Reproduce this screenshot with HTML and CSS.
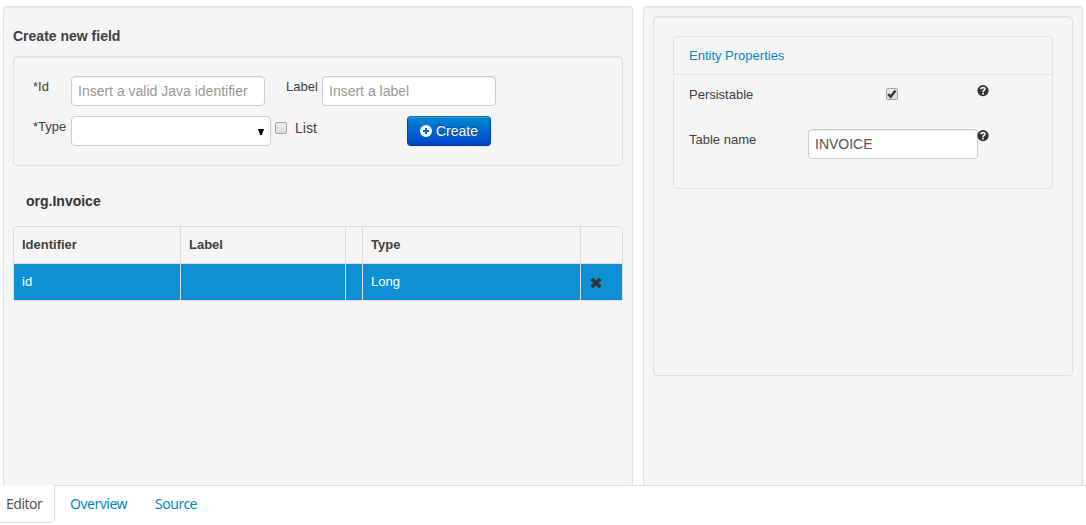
FILE: index.html
```html
<!DOCTYPE html>
<html lang="en">
<head>
<meta charset="utf-8">
<title>Data object editor</title>
<link rel="stylesheet" href="styles.css">
</head>
<body>
<main class="workspace">
  <section class="well panel-fields">
    <h2 class="title">Create new field</h2>
    <form class="well new-field">
      <div class="form-row">
        <label class="name" for="fid">*Id</label>
        <input class="control id-input" id="fid" type="text" placeholder="Insert a valid Java identifier">
        <label class="name label-name" for="flabel">Label</label>
        <input class="control label-input" id="flabel" type="text" placeholder="Insert a label">
      </div>
      <div class="form-row">
        <span class="name">*Type</span>
        <div class="control select" role="combobox" aria-label="Type">
          <svg width="6" height="7" viewBox="0 0 6 7"><path d="M0 1h6L3.8 7H2.2z"/></svg>
        </div>
        <span class="checkbox list-check" role="checkbox" aria-checked="false"></span>
        <span class="list-text">List</span>
        <button class="button" type="button">
          <svg width="12" height="12" viewBox="0 0 12 12"><path fill="#fff" fill-rule="evenodd" d="M6 0a6 6 0 1 0 0 12A6 6 0 0 0 6 0zM5 3h2v2h2v2H7v2H5V7H3V5h2z"/></svg>
          <span>Create</span>
        </button>
      </div>
    </form>
    <h3 class="entity">org.Invoice</h3>
    <div class="table">
      <div class="tr head"><span>Identifier</span><span>Label</span><span></span><span>Type</span><span></span></div>
      <div class="tr selected"><span>id</span><span></span><span></span><span>Long</span><span class="remove"><svg width="12" height="12" viewBox="0 0 12 12"><path d="M3 1 6 4l3-3 2.2 2.2-3 2.8 3 2.8L9 11 6 8l-3 3L.8 8.8l3-2.8-3-2.8z" fill="#333" stroke="#333" stroke-width=".8" stroke-linejoin="round"/></svg></span></div>
    </div>
  </section>
  <section class="well panel-props">
    <div class="well props-well">
      <div class="accordion">
        <a class="accordion-head">Entity Properties</a>
        <div class="prop">
          <span class="prop-name">Persistable</span>
          <span class="prop-value"><span class="checkbox" role="checkbox" aria-checked="true"><svg width="11" height="11" viewBox="0 0 11 11"><path d="M2 5.6 4.3 8 8.7 2.3" fill="none" stroke="#3c3c3c" stroke-width="2.3"/></svg></span></span>
          <svg class="help" width="12" height="12" viewBox="0 0 12 12"><circle cx="6" cy="5.6" r="5.6" fill="#333"/><path d="M4 4.2C4 2 8 2 8 4.1 8 5.4 6 5.4 6 6.9" fill="none" stroke="#f5f5f5" stroke-width="1.7"/><path d="M5.1 7.7h1.8v1.7H5.1z" fill="#f5f5f5"/></svg>
        </div>
        <div class="prop">
          <span class="prop-name">Table name</span>
          <span class="prop-value"><input class="control table-name" type="text" value="INVOICE" aria-label="Table name"></span>
          <svg class="help" width="12" height="12" viewBox="0 0 12 12"><circle cx="6" cy="5.6" r="5.6" fill="#333"/><path d="M4 4.2C4 2 8 2 8 4.1 8 5.4 6 5.4 6 6.9" fill="none" stroke="#f5f5f5" stroke-width="1.7"/><path d="M5.1 7.7h1.8v1.7H5.1z" fill="#f5f5f5"/></svg>
        </div>
      </div>
    </div>
  </section>
</main>
<nav class="tabs">
  <a class="tab active">Editor</a>
  <a class="tab">Overview</a>
  <a class="tab">Source</a>
</nav>
</body>
</html>
```

FILE: styles.css
```css
* { box-sizing: border-box; }
body {
  margin: 0;
  height: 525px;
  overflow: hidden;
  display: flex;
  flex-direction: column;
  background: #fff;
  color: #404040;
  font: 13px/20px "Liberation Sans", Arial, sans-serif;
}
svg { display: block; flex: none; }
.workspace {
  display: grid;
  grid-template-columns: 630px 440px;
  gap: 10px;
  height: 485px;
  padding: 6px 3px 0;
}
.well {
  background: #f5f5f5;
  border: 1px solid #e1e1e1;
  border-radius: 4px;
  box-shadow: inset 0 1px 1px rgba(0, 0, 0, .05);
}
.panel-fields, .panel-props {
  padding: 9px;
  border-bottom: 0;
  border-radius: 4px 4px 0 0;
}
.title { margin: 10px 0 10px; font-size: 14px; line-height: 20px; color: #404040; }
.new-field {
  display: flex;
  flex-direction: column;
  gap: 10px;
  height: 110px;
  padding: 19px;
}
.form-row { display: flex; height: 30px; }
.name { width: 38px; padding-top: 1px; }
.label-name { width: 36px; margin-left: 21px; }
.control {
  height: 30px;
  margin: 0;
  padding: 4px 6px;
  border: 1px solid #ccc;
  border-radius: 4px;
  background: #fff;
  box-shadow: inset 0 1px 1px rgba(0, 0, 0, .075);
  color: #555;
  font: 14px/20px "Liberation Sans", Arial, sans-serif;
}
.control::placeholder { color: #999; opacity: 1; }
.id-input { width: 194px; }
.label-input { width: 174px; }
.select {
  display: flex;
  justify-content: flex-end;
  align-items: center;
  width: 200px;
  padding: 0 6px;
  box-shadow: none;
}
.checkbox {
  display: block;
  width: 12px;
  height: 12px;
  border: 1px solid #a5a5a5;
  border-radius: 2px;
  background: linear-gradient(#eee, #dcdcdc);
}
.checkbox svg { margin: -1px 0 0 -1px; width: 12px; height: 12px; }
.list-check { margin: 6px 8px 0 4px; }
.list-text { width: 112px; margin-top: 2px; font-size: 14px; }
.button {
  display: flex;
  align-items: center;
  gap: 4px;
  width: 84px;
  height: 30px;
  padding: 0 12px;
  border: 1px solid;
  border-color: #0077b3 #0044b3 #003aa8;
  border-radius: 4px;
  background: linear-gradient(#0088cc, #0044cc);
  box-shadow: inset 0 1px 0 rgba(255, 255, 255, .2), 0 1px 2px rgba(0, 0, 0, .05);
  color: #fff;
  font: 14px/20px "Liberation Sans", Arial, sans-serif;
  text-shadow: 0 -1px 0 rgba(0, 0, 0, .25);
}
.entity { margin: 25px 13px 15px; font-size: 14px; line-height: 20px; color: #333; }
.table {
  border: 1px solid #ddd;
  border-radius: 4px 4px 1px 1px;
  overflow: hidden;
}
.tr { display: grid; grid-template-columns: 166px 165px 17px 218px 42px; }
.tr span { height: 36px; padding: 8px; border-left: 1px solid #ddd; }
.tr span:first-child { border-left: 0; }
.head { font-weight: bold; border-bottom: 1px solid #ddd; }
.selected { background: #1090d4; color: #fff; }
.tr .remove { padding: 13px 9px; }
.props-well { height: 360px; padding: 19px; }
.accordion { height: 153px; border: 1px solid #e3e3e3; border-radius: 4px; }
.accordion-head {
  display: block;
  height: 38px;
  padding: 9px 15px;
  border-bottom: 1px solid #e3e3e3;
  color: #0088cc;
}
.prop {
  display: grid;
  grid-template-columns: 119px 170px 12px;
  height: 45px;
  padding: 0 15px;
}
.prop-name { margin-top: 10px; }
.prop .checkbox { margin: 13px 80px 0 78px; }
.help { margin: 10px 0 0 -1px; }
.table-name { display: block; width: 170px; margin-top: 9px; }
.tabs {
  display: flex;
  height: 40px;
  border-top: 1px solid #ddd;
  font: 14px/20px "Noto Sans", "Open Sans", sans-serif;
  letter-spacing: -.5px;
}
.tab { height: 37px; padding: 8px 12px; margin-right: 4px; color: #0088cc; }
.tab.active {
  margin: -1px 3px 0 0;
  height: 38px;
  width: 55px;
  padding: 9px 0 0 6px;
  border: 1px solid #ddd;
  border-width: 0 1px 1px 0;
  border-radius: 0 0 4px 0;
  background: #fff;
  color: #555;
}
```
